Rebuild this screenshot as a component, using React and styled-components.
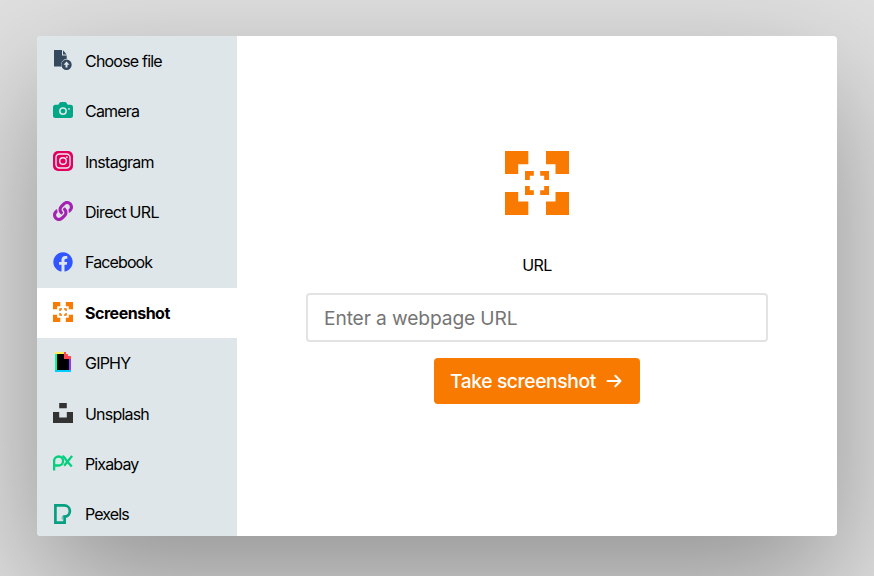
import React from "react";
import styled, { createGlobalStyle } from "styled-components";
import { FaLink, FaFacebook } from "react-icons/fa";

const GlobalStyle = createGlobalStyle`
  * { box-sizing: border-box; }
  body {
    margin: 0;
    background: #e0e0e0;
    font-family: Inter, "Liberation Sans", sans-serif;
    color: #000;
  }
`;

const Page = styled.div`
  display: flex;
  width: 874px;
  height: 576px;
  padding: 36px 37px 40px;
  overflow: hidden;
`;

const Picker = styled.div`
  display: flex;
  width: 800px;
  height: 500px;
  border-radius: 4px;
  background: #fff;
  box-shadow: 0 50px 130px rgba(0, 0, 0, 0.35);
`;

const Sidebar = styled.nav`
  width: 200px;
  flex: none;
  overflow: hidden;
  border-radius: 4px 0 0 4px;
  background: #dee6e9;
`;

const SourceRow = styled.button`
  display: flex;
  align-items: center;
  gap: 12px;
  width: 100%;
  height: 50.4px;
  padding: 0 16px 2.4px;
  border: 0;
  background: ${(p) => (p.$active ? "#fff" : "transparent")};
  font: ${(p) => (p.$active ? 700 : 400)} 16px Inter, sans-serif;
  color: #000;
  text-align: left;

  svg {
    display: block;
    flex: none;
    width: 20px;
    height: 20px;
  }
`;

const SourceLabel = styled.span`
  line-height: 20px;
  padding-top: 1.74px;
  white-space: nowrap;
  letter-spacing: ${(p) => p.$tracking}px;
`;

const Panel = styled.main`
  display: flex;
  flex: 1;
  flex-direction: column;
  align-items: center;
  padding-top: 115px;
`;

const Logo = styled.div`
  height: 64px;
  svg { display: block; width: 64px; height: 64px; }
`;

const FieldLabel = styled.label`
  margin-top: 40px;
  font-size: 16px;
  line-height: 20px;
  letter-spacing: -0.6px;
`;

const UrlInput = styled.input`
  width: 462px;
  height: 49px;
  margin-top: 18px;
  padding: 0 16px;
  border: 2px solid #e3e3e3;
  border-radius: 4px;
  background: #fff;
  font: 400 19.2px Inter, sans-serif;
  letter-spacing: -0.12px;
  outline: 0;
  &::placeholder { color: #757575; opacity: 1; }
`;

const SubmitButton = styled.button`
  display: flex;
  align-items: center;
  justify-content: space-between;
  width: 206px;
  height: 46px;
  margin-top: 16px;
  padding: 0 18px 0 16px;
  border: 0;
  border-radius: 4px;
  background: #f97a00;
  color: #fff;
  font: 500 19.2px Inter, sans-serif;
  letter-spacing: -0.36px;
  white-space: nowrap;
  svg { flex: none; }
`;

const FileIcon = () => (
  <svg viewBox="0 0 20 20" fill="#34495e">
    <path d="M1 0h8v5.500h4.700v3.200a6 6 0 0 0-5.400 7.800H1z" />
    <path d="M10 .2 13.600 4.500H10z" />
    <path fillRule="evenodd" d="M13.500 9.500a5.200 5.200 0 1 1 0 10.400a5.200 5.200 0 0 1 0-10.400zm0 2-3 3.200h2v2.700h2v-2.700h2z" />
  </svg>
);

const CameraIcon = () => (
  <svg viewBox="0 0 20 20" fill="#02a787">
    <path d="M2.500 4.800h2.800L6.600 2.700Q7 2 7.800 2h4.400q.8 0 1.200.7l1.300 2.100h2.800Q20 4.800 20 7.300v8.200q0 2.500-2.500 2.500h-15Q0 18 0 15.500V7.300q0-2.500 2.500-2.500z" />
    <circle cx="10" cy="11.100" r="3.200" fill="none" stroke="#dee6e9" strokeWidth="1.500" />
    <circle cx="16" cy="8.900" r=".9" fill="#dee6e9" />
  </svg>
);

const InstagramIcon = () => (
  <svg viewBox="0 0 20 20">
    <rect width="20" height="20" rx="5" fill="#e1005f" />
    <g fill="none" stroke="#eee7ec" strokeWidth="1.400">
      <rect x="3" y="3" width="14" height="14" rx="3.500" />
      <circle cx="10" cy="10" r="3.300" />
    </g>
    <circle cx="13.900" cy="6.100" r=".9" fill="#eee7ec" />
  </svg>
);

const LinkIcon = () => <FaLink color="#a421b2" />;
const FacebookIcon = () => <FaFacebook color="#3156ff" />;

const ScreenshotIcon = () => (
  <svg viewBox="0 0 64 64" fill="#f97a00">
    <path d="M0 0h23.300v13.200H13.200V23H0zM41 0h23v23H50.500V13.200H41zM0 41h13.200v9.500h10.100V64H0zM50.500 41H64v23H41V50.500h9.500z" />
    <path d="M20 20h8.800v4.800h-4V29H20zM35.200 20H44v9h-4.800v-4.200h-4zM20 35h4.800v4.200h4V44H20zM39.200 35H44v9h-8.800v-4.800h4z" />
  </svg>
);

const GiphyIcon = () => (
  <svg viewBox="0 0 20 20" shapeRendering="crispEdges">
    <path fill="#000" d="M4 2h7v5h5v11H4z" />
    <path fill="#fff152" d="M2 0h9v2H2z" />
    <path fill="#00ff99" d="M2 2h2v16H2z" />
    <path fill="#00ccff" d="M2 18h16v2H2z" />
    <path fill="#9933ff" d="M16 7h2v11h-2z" />
    <path fill="#ff4655" d="M11 0h2v2h2v2h3v3h-7z" />
  </svg>
);

const UnsplashIcon = () => (
  <svg viewBox="0 0 20 20" fill="#333">
    <path d="M6.200 0h7.600v5.300H6.200zM0 9h6.200v5.500h7.600V9H20v11H0z" />
  </svg>
);

const PixabayIcon = () => (
  <svg viewBox="0 0 20 20" fill="none" stroke="#02d07d" strokeWidth="2.300">
    <path d="M1.100 17.500V8a4.500 4.500 0 1 1 4.500 4.500H1.100" />
    <path d="M9.300 3.100q1.400.3 2.400 1.800l2.700 3.900 4.400 4.700M19.100 2.900l-4.700 5.900-3.300 4" />
  </svg>
);

const PexelsIcon = () => (
  <svg viewBox="0 0 20 20" fill="none" stroke="#05a081" strokeWidth="2.700">
    <path d="M2.400 1.400h8.900a5.700 5.700 0 0 1 .9 11.300h-.6v5.900H2.400z" />
    <path d="M9 12.400h3M9.300 12.400v3" strokeWidth="1.300" opacity=".5" />
  </svg>
);

const ArrowIcon = () => (
  <svg width="16" height="16" viewBox="0 0 16 16" fill="none" stroke="#fff" strokeWidth="2" strokeLinecap="round" strokeLinejoin="round">
    <path d="M1.500 8h13M9.300 2.800 14.500 8l-5.200 5.200" />
  </svg>
);

const sources = [
  { name: "Choose file", Icon: FileIcon, tracking: -0.8 },
  { name: "Camera", Icon: CameraIcon, tracking: -0.8 },
  { name: "Instagram", Icon: InstagramIcon, tracking: -0.72 },
  { name: "Direct URL", Icon: LinkIcon, tracking: -0.68 },
  { name: "Facebook", Icon: FacebookIcon, tracking: -0.88 },
  { name: "Screenshot", Icon: ScreenshotIcon, tracking: -0.48, active: true },
  { name: "GIPHY", Icon: GiphyIcon, tracking: -0.8 },
  { name: "Unsplash", Icon: UnsplashIcon, tracking: -0.8 },
  { name: "Pixabay", Icon: PixabayIcon, tracking: -0.86 },
  { name: "Pexels", Icon: PexelsIcon, tracking: -0.9 },
];

export default function App() {
  return (
    <>
      <GlobalStyle />
      <Page>
        <Picker>
          <Sidebar>
            {sources.map(({ name, Icon, tracking, active }) => (
              <SourceRow key={name} $active={active}>
                <Icon />
                <SourceLabel $tracking={tracking}>{name}</SourceLabel>
              </SourceRow>
            ))}
          </Sidebar>
          <Panel>
            <Logo><ScreenshotIcon /></Logo>
            <FieldLabel htmlFor="url">URL</FieldLabel>
            <UrlInput id="url" placeholder="Enter a webpage URL" />
            <SubmitButton>
              Take screenshot
              <ArrowIcon />
            </SubmitButton>
          </Panel>
        </Picker>
      </Page>
    </>
  );
}
